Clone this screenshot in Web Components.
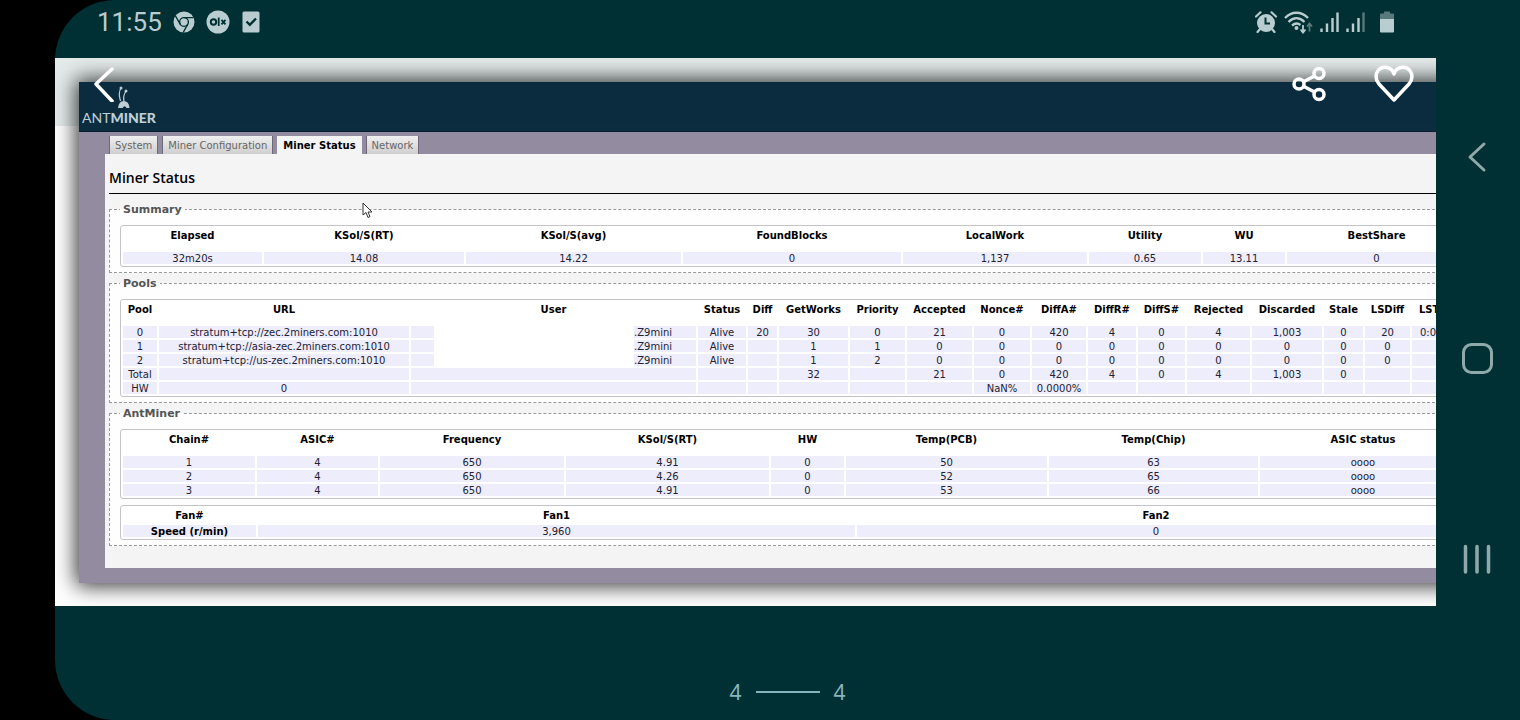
<!DOCTYPE html>
<html lang="en">
<head>
<meta charset="utf-8">
<meta name="viewport" content="width=device-width, initial-scale=1">
<title>Miner Status</title>
<style>
  body { margin: 0; background: #000; font-family: "DejaVu Sans", Verdana, sans-serif; }
</style>
</head>
<body>
<phone-screen>
  <status-bar slot="status"></status-bar>
  <photo-viewer slot="photo">
    <miner-window>
      <miner-section heading="Summary"><miner-table name="summary"></miner-table></miner-section>
      <miner-section heading="Pools"><miner-table name="pools"></miner-table></miner-section>
      <miner-section heading="AntMiner">
        <miner-table name="chains"></miner-table>
        <miner-table name="fans"></miner-table>
      </miner-section>
    </miner-window>
  </photo-viewer>
  <page-counter slot="counter" current="4" total="4"></page-counter>
  <system-nav slot="nav"></system-nav>
</phone-screen>

<script>
function define(name, html, setup) {
  customElements.define(name, class extends HTMLElement {
    constructor() {
      super();
      this.attachShadow({ mode: 'open' }).innerHTML = html;
    }
    connectedCallback() { if (setup) setup(this, this.shadowRoot); }
  });
}

define('phone-screen', `
<style>
  :host { display: grid; grid-template-columns: minmax(0, 1fr) 84px; grid-template-rows: 58px minmax(auto, 1fr) 114px;
    min-height: 100vh; margin-left: 55px; background: #003033; border-radius: 60px 0 0 60px; }
  ::slotted([slot=status]) { grid-area: 1 / 1 / 2 / 3; }
  ::slotted([slot=photo]) { grid-area: 2 / 1 / 3 / 2; }
  ::slotted([slot=counter]) { grid-area: 3 / 1 / 4 / 3; }
  ::slotted([slot=nav]) { grid-area: 1 / 2 / 4 / 3; }
</style>
<slot name="status"></slot><slot name="photo"></slot><slot name="counter"></slot><slot name="nav"></slot>`);

define('status-bar', `
<style>
  :host { display: flex; justify-content: space-between; align-items: center; box-sizing: border-box;
    padding: 0 125px 14px 42px; color: #b9cdd0; font: 26px/30px Roboto, sans-serif; }
  div { display: flex; align-items: center; }
  .left { gap: 11px; }
  .right { gap: 7px; }
  svg { display: block; }
  .bat { margin-left: 7px; }
</style>
<div class="left">
  <time>11:55</time>
  <svg width="22" height="22" viewBox="0 0 22 22"><circle cx="11" cy="11" r="10.5" fill="#b9cdd0"/><circle cx="11" cy="11" r="4.4" fill="none" stroke="#003033" stroke-width="1.4"/><path d="M11 6.6H20.500M7.200 13.200L2.500 5M14.800 13.200L10.200 21.500" fill="none" stroke="#003033" stroke-width="1.4"/></svg>
  <svg width="24" height="24" viewBox="0 0 24 24"><circle cx="12" cy="12" r="11.500" fill="#b9cdd0"/><circle cx="7.500" cy="12" r="2.700" fill="none" stroke="#003033" stroke-width="2"/><path d="M12.700 7.500V16M15.500 9.800L19.500 14.300M19.500 9.800L15.500 14.300" fill="none" stroke="#003033" stroke-width="1.8"/></svg>
  <svg width="20" height="22" viewBox="0 0 20 22"><rect x="1.500" y="0.500" width="17" height="21" rx="1.500" fill="#b9cdd0"/><path d="M5.500 10.500L8.800 13.800L15 7.500" fill="none" stroke="#003033" stroke-width="2.400"/></svg>
</div>
<div class="right">
  <svg width="22" height="22" viewBox="0 0 22 22"><circle cx="11" cy="12" r="9" fill="#b9cdd0"/><path d="M1 5.500L5.500 1.300M21 5.500L16.500 1.300M5 18L2.500 21M17 18L19.500 21" stroke="#b9cdd0" stroke-width="2.200" stroke-linecap="round"/><path d="M10.500 6.500V12.500H15" fill="none" stroke="#003033" stroke-width="2"/></svg>
  <svg width="29" height="23" viewBox="0 0 29 23"><g fill="none" stroke="#b9cdd0" stroke-width="2.300"><path d="M1 7C7.500 0 17.500 0 24 7"/><path d="M4.500 11C9.500 6 15.500 6 20.500 11"/><path d="M8 14.500C11 12 14 12 16.500 14"/></g><circle cx="12.500" cy="17" r="2" fill="#b9cdd0"/><path d="M19 14V21M16.500 18.500L19 21.500L21.500 18.500" fill="none" stroke="#b9cdd0" stroke-width="1.800"/><path d="M25.500 20.500V13M23 15.500L25.500 12.500L28 15.500" fill="none" stroke="#57797b" stroke-width="1.800"/></svg>
  <svg width="19" height="22" viewBox="0 0 19 22"><path d="M1.500 17.500V21M7 12.500V21M12.500 7V21M17.500 1.500V21" stroke="#b9cdd0" stroke-width="2.400"/></svg>
  <svg width="19" height="22" viewBox="0 0 19 22"><path d="M1.500 17.500V21M7 12.500V21M12.500 7V21" stroke="#b9cdd0" stroke-width="2.400"/><path d="M17.500 1.500V21" stroke="#57797b" stroke-width="2.400"/></svg>
  <svg class="bat" width="16" height="22" viewBox="0 0 16 22"><path d="M1 3.500Q1 2.500 2 2.500H5V0.500H11V2.500H14Q15 2.500 15 3.500V8H1Z" fill="#57797b"/><path d="M1 8H15V20.500Q15 21.500 14 21.500H2Q1 21.500 1 20.500Z" fill="#b9cdd0"/></svg>
</div>`);

define('system-nav', `
<style>
  :host { display: flex; flex-direction: column; align-items: center; justify-content: space-around; padding: 56px 0 61px; }
  button { border: 0; padding: 0; background: none; width: 40px; height: 40px; margin-right: 2px; }
  svg { display: block; fill: none; stroke: #8fa9ab; stroke-width: 3; stroke-linecap: round; stroke-linejoin: round; }
</style>
<button aria-label="Back"><svg width="40" height="40"><path d="M27 7L13 20L27 33"/></svg></button>
<button aria-label="Home"><svg width="40" height="40"><rect x="6.500" y="6.500" width="28" height="28" rx="8"/></svg></button>
<button aria-label="Recent apps"><svg width="40" height="40"><path d="M8.500 7.500V33M20 7.500V33M31.500 7.500V33" stroke-width="3.500"/></svg></button>`);

define('page-counter', `
<style>
  :host { display: flex; align-items: center; justify-content: center; gap: 14px; padding-top: 58px; box-sizing: border-box;
    color: #86b4bc; font: 21px/28px "Noto Sans", sans-serif; }
  i { width: 64px; height: 2px; background: #86b4bc; }
</style>
<span id="a"></span><i></i><span id="b"></span>`, (el, root) => {
  root.getElementById('a').textContent = el.getAttribute('current');
  root.getElementById('b').textContent = el.getAttribute('total');
});

define('photo-viewer', `
<style>
  :host { display: block; position: relative; overflow: hidden; background: #fff; }
  nav { position: absolute; top: 0; left: 0; right: 0; height: 68px; display: flex; align-items: center;
    padding: 0 20px 24px 30px; box-sizing: border-box; background: rgba(0, 48, 51, .1); }
  button { border: 0; padding: 0; background: none; width: 44px; height: 44px; }
  .back { margin-right: auto; }
  .share { margin-right: 40px; }
  svg { display: block; fill: none; stroke: #fff; stroke-width: 3.500; stroke-linecap: round; stroke-linejoin: round; }
</style>
<slot></slot>
<nav>
  <button class="back" aria-label="Back"><svg width="44" height="44"><path d="M27 11L11 26L27 43"/></svg></button>
  <button class="share" aria-label="Share"><svg width="44" height="44"><circle cx="11" cy="26" r="5"/><circle cx="31" cy="15.500" r="5"/><circle cx="31" cy="36.500" r="5"/><path d="M16 23.500L26 18.200M16 28.500L26 33.800"/></svg></button>
  <button aria-label="Favourite"><svg width="44" height="44"><path d="M22 16C20 9 11 7 6.500 12C2.500 17 4 22 7 26L22 42L37 26C40 22 41.500 17 37.500 12C33 7 24 9 22 16Z"/></svg></button>
</nav>`);

define('miner-window', `
<style>
  :host { display: block; margin: 24px -74px 23px 24px; background: #938ba0; box-shadow: 0 0 20px 3px rgba(0, 0, 0, .8); }
  header { height: 50px; box-sizing: border-box; padding: 4px 0 0 3px; background: #0c2c40; border-bottom: 1px solid #0a1f30; color: #d3e0e8; }
  .logo { display: block; width: 75px; color: inherit; text-decoration: none; font: 14px/18px Lato, sans-serif; white-space: nowrap; }
  .logo b { font-weight: 900; }
  .logo svg { display: block; margin: 0 auto; position: relative; left: 4px; }
  nav { display: flex; gap: 4px; padding: 4px 0 0 30px; }
  nav a { box-sizing: border-box; height: 18px; padding: 0 5px; font-size: 10px; line-height: 20px; color: #666; text-decoration: none;
    background: linear-gradient(#f0f0f0, #cfcfcf); border: 1px solid #6e6878; border-width: 0 1px; }
  nav a[aria-current] { color: #000; font-weight: bold; background: #f4f4f4; border-color: #f4f4f4; }
  main { position: relative; margin: 0 26px; padding: 11px 4px 18px; background: #f4f4f4; }
  h1 { margin: 0 0 9px; padding-bottom: 2px; font: 600 14px/26px "Open Sans", sans-serif; color: #000; border-bottom: 1px solid #000; }
  .foot { height: 15px; }
  .pointer { position: absolute; left: 257px; top: 48px; }
</style>
<header>
  <a class="logo" href="#home">
    <svg width="14" height="23" viewBox="0 0 14 23"><path d="M3.500 15C2 10 2 5 4 2M7 15C6 11 7 8 9 5" fill="none" stroke="#d3e0e8" stroke-width="1.200"/><circle cx="4" cy="2" r="1.500" fill="#d3e0e8"/><circle cx="9" cy="5" r="1.500" fill="#d3e0e8"/><path d="M1 22Q2 15 6.500 15Q12 15 12.500 22H9.500Q8 18.500 5.500 22Z" fill="#d3e0e8"/></svg>
    ANT<b>MINER</b></a>
</header>
<nav>
  <a href="#system">System</a><a href="#config">Miner Configuration</a><a href="#status" aria-current="page">Miner Status</a><a href="#network">Network</a>
</nav>
<main>
  <h1>Miner Status</h1>
  <slot></slot>
  <svg class="pointer" width="12" height="17" viewBox="0 0 12 17"><path d="M1 1V13L4 10.500L6 15.500L8 14.500L6 10H10Z" fill="#fff" stroke="#333"/></svg>
</main>
<div class="foot"></div>`);

define('miner-section', `
<style>
  :host { display: block; margin-bottom: 4px; }
  fieldset { margin: 0; min-width: 0; border: 1px dashed #999; padding: 9px 10px 5px; background: #fefefe; }
  legend { padding: 0 3px; font-size: 11px; line-height: 13px; font-weight: bold; color: #555; }
  div { display: grid; gap: 6px; }
</style>
<fieldset><legend></legend><div><slot></slot></div></fieldset>`, (el, root) => {
  root.querySelector('legend').textContent = el.getAttribute('heading');
});

const tables = {
  summary: {
    widths: [139, 200, 215, 218, 184, 112, 82, 179],
    head: ['Elapsed', 'KSol/S(RT)', 'KSol/S(avg)', 'FoundBlocks', 'LocalWork', 'Utility', 'WU', 'BestShare'],
    rows: [['32m20s', '14.08', '14.22', '0', '1,137', '0.65', '13.11', '0']]
  },
  pools: {
    widths: [34, 250, 285, 48, 29, 69, 55, 65, 56, 54, 48, 47, 63, 70, 39, 45, 54],
    head: ['Pool', 'URL', 'User', 'Status', 'Diff', 'GetWorks', 'Priority', 'Accepted', 'Nonce#', 'DiffA#', 'DiffR#', 'DiffS#', 'Rejected', 'Discarded', 'Stale', 'LSDiff', 'LST'],
    rows: [
      ['0', 'stratum+tcp://zec.2miners.com:1010', '.Z9mini', 'Alive', '20', '30', '0', '21', '0', '420', '4', '0', '4', '1,003', '0', '20', '0:0'],
      ['1', 'stratum+tcp://asia-zec.2miners.com:1010', '.Z9mini', 'Alive', '', '1', '1', '0', '0', '0', '0', '0', '0', '0', '0', '0', ''],
      ['2', 'stratum+tcp://us-zec.2miners.com:1010', '.Z9mini', 'Alive', '', '1', '2', '0', '0', '0', '0', '0', '0', '0', '0', '0', ''],
      ['Total', '', '', '', '', '32', '', '21', '0', '420', '4', '0', '4', '1,003', '0', '', ''],
      ['HW', '0', '', '', '', '', '', '', 'NaN%', '0.0000%', '', '', '', '', '', '', '']
    ]
  },
  chains: {
    widths: [132, 121, 184, 203, 73, 201, 209, 206],
    head: ['Chain#', 'ASIC#', 'Frequency', 'KSol/S(RT)', 'HW', 'Temp(PCB)', 'Temp(Chip)', 'ASIC status'],
    rows: [
      ['1', '4', '650', '4.91', '0', '50', '63', 'oooo'],
      ['2', '4', '650', '4.26', '0', '52', '65', 'oooo'],
      ['3', '4', '650', '4.91', '0', '53', '66', 'oooo']
    ]
  },
  fans: {
    widths: [133, 597, 598],
    head: ['Fan#', 'Fan1', 'Fan2'],
    rows: [['Speed (r/min)', '3,960', '0']]
  }
};

define('miner-table', `
<style>
  :host { display: block; font-size: 10px; line-height: 10px; color: #223; }
  table { width: 100%; table-layout: fixed; border-collapse: separate; border-spacing: 2px; border: 1px solid #c4c4c8; border-radius: 3px; background: #fff; }
  th, td { padding: 2px 0 0; text-align: center; white-space: nowrap; height: 10px; }
  th { color: #000; }
  thead th { height: 16px; line-height: 16px; padding: 0 0 6px; }
  tbody > tr > * { background: #ededfb; }
  :host([name=fans]) { margin-right: 11px; }
  :host([name=fans]) thead th { height: 15px; line-height: 15px; padding: 0; }
  .user { text-align: left; padding: 0 0 0 23px; line-height: 12px; }
  .user div { display: flex; height: 12px; }
  .user i { flex: none; width: 200px; background: #fff; }
  .user span { padding-top: 2px; line-height: 10px; }
  .time { text-align: left; padding-left: 8px; }
  thead .time { padding-left: 7px; }
</style>
<table><colgroup></colgroup><thead></thead><tbody></tbody></table>`, (el, root) => {
  const name = el.getAttribute('name');
  const t = tables[name];
  const cell = (v, i) => {
    if (name === 'fans' && i === 0) return `<th scope="row">${v}</th>`;
    if (name === 'pools' && i === 2 && v) return `<td class="user"><div><i></i><span>${v}</span></div></td>`;
    if (name === 'pools' && i === 16) return `<td class="time">${v}</td>`;
    return `<td>${v}</td>`;
  };
  root.querySelector('colgroup').innerHTML = t.widths.map(w => `<col style="width:${w}px">`).join('');
  root.querySelector('thead').innerHTML = '<tr>' + t.head.map((h, i) => `<th scope="col"${i === 16 ? ' class="time"' : ''}>${h}</th>`).join('') + '</tr>';
  root.querySelector('tbody').innerHTML = t.rows.map(r => '<tr>' + r.map(cell).join('') + '</tr>').join('');
});
</script>
</body>
</html>
